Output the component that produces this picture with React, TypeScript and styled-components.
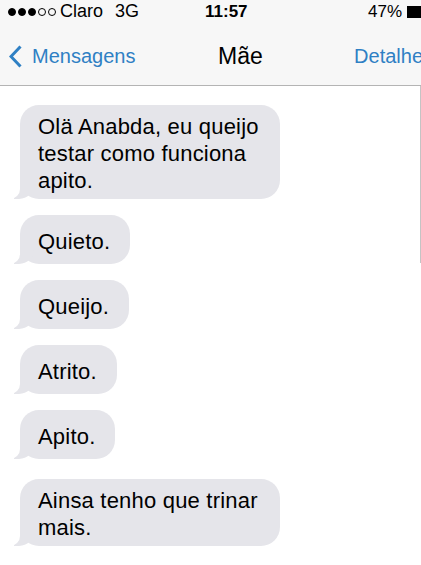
import React from 'react';
import styled, { createGlobalStyle } from 'styled-components';

const GlobalStyle = createGlobalStyle`
  html, body {
    margin: 0;
    padding: 0;
    background: #ffffff;
  }
  body {
    font-family: "Liberation Sans", Arial, sans-serif;
    color: #000;
  }
`;

const Screen = styled.div`
  width: 421px;
  height: 565px;
  overflow: hidden;
  background: #ffffff;
`;

const Header = styled.header`
  width: 441px;
  background: #f7f7f7;
  border-bottom: 1px solid #b4b4b4;
`;

const StatusBar = styled.div`
  display: grid;
  grid-template-columns: 205px 1fr auto;
  align-items: center;
  height: 22px;
  padding: 1px 8px 0 0;
  box-sizing: border-box;
  font-size: 18px;
  line-height: 21px;
`;

const Carrier = styled.div`
  display: flex;
  align-items: center;
  padding-left: 8px;
`;

const Signal = styled.div`
  display: flex;
  gap: 2px;
  margin-right: 4px;
`;

const Dot = styled.span<{ $on: boolean }>`
  width: 8px;
  height: 8px;
  box-sizing: border-box;
  border-radius: 50%;
  border: 1px solid #000;
  background: ${(p) => (p.$on ? '#000' : 'transparent')};
`;

const Network = styled.span`
  margin-left: 12px;
`;

const Time = styled.span`
  font-size: 17px;
  font-weight: bold;
`;

const Battery = styled.div`
  display: flex;
  align-items: center;
  gap: 5px;
  font-size: 17px;
`;

const NavBar = styled.nav`
  display: grid;
  grid-template-columns: 209px auto 1fr;
  align-items: center;
  height: 63px;
  box-sizing: border-box;
  padding: 6px 8px 0 9px;
`;

const BackLink = styled.a`
  display: flex;
  align-items: center;
  gap: 10px;
  color: #2f80c4;
  font-size: 20px;
  text-decoration: none;
`;

const Title = styled.h1`
  margin: 0;
  font-size: 23px;
  font-weight: normal;
  color: #000;
`;

const DetailsLink = styled.a`
  justify-self: end;
  color: #2f80c4;
  font-size: 20px;
  text-decoration: none;
`;

const Thread = styled.main`
  position: relative;
  display: flex;
  flex-direction: column;
  align-items: flex-start;
  gap: 16px;
  padding: 19px 0 0 20px;
`;

const ScrollEdge = styled.div`
  position: absolute;
  top: 0;
  right: 0;
  width: 1px;
  height: 177px;
  background: #c4c4c4;
`;

const Bubble = styled.div<{ $gapBefore?: number }>`
  position: relative;
  display: flex;
  align-items: center;
  box-sizing: border-box;
  max-width: 260px;
  min-height: 49px;
  margin-top: ${(p) => p.$gapBefore ?? 0}px;
  padding: 8px 20px 5px 18px;
  border-radius: 19px;
  background: #e5e5ea;
  font-size: 22px;
  line-height: 27px;
  letter-spacing: 0.2px;
  color: #000;

  &::before {
    content: '';
    position: absolute;
    bottom: 0;
    left: -6px;
    width: 20px;
    height: 20px;
    background: #e5e5ea;
    border-bottom-right-radius: 15px;
  }

  &::after {
    content: '';
    position: absolute;
    bottom: 0;
    left: -10px;
    width: 10px;
    height: 20px;
    background: #ffffff;
    border-bottom-right-radius: 10px;
  }
`;

const messages = [
  { text: 'Olä Anabda, eu queijo testar como funciona apito.' },
  { text: 'Quieto.' },
  { text: 'Queijo.' },
  { text: 'Atrito.' },
  { text: 'Apito.' },
  { text: 'Ainsa tenho que trinar mais.', gap: 4 },
];

const Chevron = () => (
  <svg width="13" height="23" viewBox="0 0 13 23">
    <polyline
      points="11.5,1.5 2,11.5 11.5,21.5"
      fill="none"
      stroke="#2f80c4"
      strokeWidth="3"
      strokeLinecap="butt"
      strokeLinejoin="miter"
    />
  </svg>
);

const BatteryIcon = () => (
  <svg width="26" height="12" viewBox="0 0 26 12">
    <rect x="0" y="0" width="23" height="12" fill="#000" />
    <rect x="23" y="3.5" width="2" height="5" fill="#000" />
  </svg>
);

const App = () => (
  <Screen>
    <GlobalStyle />
    <Header>
      <StatusBar>
        <Carrier>
          <Signal>
            {[true, true, true, false, false].map((on, i) => (
              <Dot key={i} $on={on} />
            ))}
          </Signal>
          <span>Claro</span>
          <Network>3G</Network>
        </Carrier>
        <Time>11:57</Time>
        <Battery>
          <span>47%</span>
          <BatteryIcon />
        </Battery>
      </StatusBar>
      <NavBar>
        <BackLink href="#">
          <Chevron />
          Mensagens
        </BackLink>
        <Title>Mãe</Title>
        <DetailsLink href="#">Detalhes</DetailsLink>
      </NavBar>
    </Header>
    <Thread>
      <ScrollEdge />
      {messages.map((m) => (
        <Bubble key={m.text} $gapBefore={m.gap}>
          {m.text}
        </Bubble>
      ))}
    </Thread>
  </Screen>
);

export default App;
